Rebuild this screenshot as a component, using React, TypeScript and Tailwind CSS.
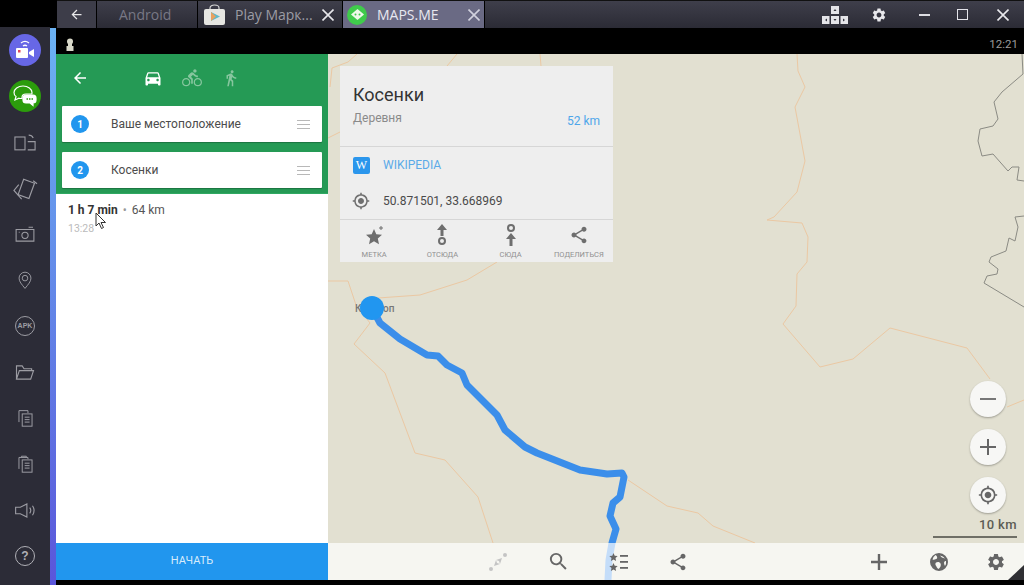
import { MdArrowBack, MdDirectionsBike, MdDirectionsCar, MdDirectionsWalk, MdMyLocation, MdSearch, MdSettings, MdShare } from 'react-icons/md'

const ROUTE = '372,308 380,323 400,339 427,355 438,356 447,365 462,373 467,385 497,415 505,430 525,447 537,453 580,470 607,474 622,473 624,477 620,497 613,503 610,516 616,529 612,543 609,560 608,580'

const ROADS = [
  '328,281 348,281 356,305 370,323 354,344 385,373 415,453 445,460 478,497 493,543',
  '378,298 420,295 467,280 497,262',
  '628,480 667,506 698,513 713,526 755,543',
  '797,54 798,71 805,87 795,107 805,161 797,192 774,217 767,220 802,223 808,237 807,262 797,274 796,306 783,324 820,367 853,359 890,328 967,348 990,379',
  '1007,407 1024,400',
  '357,54 348,62 332,68 330,87',
  '328,138 340,132',
  '447,66 457,54',
  '540,54 541,66',
]

const BORDERS = [
  '1022,54 1023,74 1002,92 994,102 998,119 993,126 980,129 978,141 982,156 993,154 1008,171 1012,167 1019,167 1017,180 1024,181',
  '1024,216 1015,217 1018,227 1015,241 1009,238 1006,251 991,257 989,262 998,269 997,274 987,276 984,283 1024,307',
]

function MapLines() {
  return (
    <svg className="absolute inset-0" width="696" height="526" viewBox="328 54 696 526" fill="none">
      {ROADS.map((p, i) => <polyline key={i} points={p} stroke="#ebc8a3" strokeWidth="1" />)}
      {BORDERS.map((p, i) => <polyline key={i} points={p} stroke="#8b8b84" strokeWidth="1" />)}
      <polyline points={ROUTE} stroke="#3b8eea" strokeWidth="7" strokeLinejoin="round" strokeLinecap="round" />
    </svg>
  )
}

function SideIcon({ children }: { children: React.ReactNode }) {
  return <div className="h-[46px] w-full flex items-center justify-center">{children}</div>
}

const stroke = { fill: 'none', stroke: '#9c9ca3', strokeWidth: 1.2 }

function CopyIcon({ tall }: { tall?: boolean }) {
  return (
    <svg width="17" height="18" viewBox="0 0 20 22" {...stroke}>
      <path d={tall ? 'M5 3V1.500h6V3M2 17V3h11v2' : 'M2 16V2h11v3'} />
      <rect x="6" y="6" width="12" height="15" />
      <path d="M9 10h6M9 13h6M9 16h6" />
    </svg>
  )
}

function Sidebar() {
  return (
    <div className="w-[50px] bg-[#2c2c37] flex flex-col items-center -mt-px">
      <SideIcon>
        <div className="w-8 h-8 rounded-full bg-[#6767e6] flex items-center justify-center">
          <svg width="20" height="22" viewBox="0 0 20 22" fill="none">
            <path d="M6 4c2.500-2 5.500-2 8 0M8 7c1.300-1 2.700-1 4 0" stroke="#fff" strokeWidth="1.300" />
            <rect x="1" y="9" width="12" height="10" rx="1" fill="#fff" />
            <path d="M14 13l5-3v8l-5-3z" fill="#fff" />
            <rect x="3" y="11" width="2.500" height="2.500" fill="#e0455a" />
          </svg>
        </div>
      </SideIcon>
      <SideIcon>
        <div className="w-8 h-8 rounded-full bg-[#2c9c0c] flex items-center justify-center">
          <svg width="26" height="24" viewBox="0 0 26 24" fill="none" stroke="#fff" strokeWidth="1.200">
            <path d="M11 2c5 0 9 3 9 6.500 0 .5 0 1-.2 1.500H14c-2.500 0-4 1.500-4 3.500v1c-1 0-2 0-3-.3L3 16l1-3.500C2.500 11.500 2 10 2 8.500 2 5 6 2 11 2z" />
            <path d="M14 11h7c2 0 3 1.300 3 3v2c0 1.700-1 3-3 3v2.500L18 19h-4c-2 0-3-1.300-3-3v-2c0-1.700 1-3 3-3z" fill="#fff" />
            <path d="M14.500 15h1.500M17 15h1.500M19.500 15H21" stroke="#2c9c0c" strokeWidth="1.400" />
          </svg>
        </div>
      </SideIcon>
      <SideIcon>
        <svg width="22" height="17" viewBox="0 0 24 18" {...stroke}>
          <rect x="1" y="3" width="11" height="14" />
          <path d="M15 8h8v9h-8M16 1c2 0 4 1 5 3" />
        </svg>
      </SideIcon>
      <SideIcon>
        <svg width="25" height="25" viewBox="0 0 26 26" {...stroke}>
          <rect x="8" y="5" width="12" height="17" transform="rotate(20 14 13)" />
          <path d="M6 9L1 15l8 9M21 5l4 3" />
        </svg>
      </SideIcon>
      <SideIcon>
        <svg width="20" height="16" viewBox="0 0 22 18" {...stroke}>
          <path d="M1 4h20v13H1z" />
          <circle cx="11" cy="10.500" r="3.500" />
          <path d="M15 1.500h5M4 7h1" />
        </svg>
      </SideIcon>
      <SideIcon>
        <svg width="16" height="19" viewBox="0 0 18 24" {...stroke}>
          <path d="M9 22C5 17 1.500 13.500 1.500 9a7.500 7.500 0 0 1 15 0C16.500 13.500 13 17 9 22z" />
          <circle cx="9" cy="9" r="3.500" />
        </svg>
      </SideIcon>
      <SideIcon>
        <div className="w-5 h-5 rounded-full border-[1.500px] border-[#9c9ca3] flex items-center justify-center font-['Liberation_Sans',sans-serif] font-bold text-[7px] text-[#9c9ca3]">
          APK
        </div>
      </SideIcon>
      <SideIcon>
        <svg width="20" height="17" viewBox="0 0 20 18" {...stroke}>
          <path d="M1 16V2h6l2 3h8v2M1 16h15l3-9H4z" />
        </svg>
      </SideIcon>
      <SideIcon><CopyIcon /></SideIcon>
      <SideIcon><CopyIcon tall /></SideIcon>
      <SideIcon>
        <svg width="22" height="15" viewBox="0 0 22 16" {...stroke}>
          <path d="M1 4.500h5L13 1v14L6 11.500H1z" />
          <path d="M16 5c1.300 1.700 1.300 4.300 0 6M19 3c2 3 2 7 0 10" />
        </svg>
      </SideIcon>
      <SideIcon>
        <div className="w-5 h-5 rounded-full border-[1.500px] border-[#b0b0b6] flex items-center justify-center font-['Liberation_Sans',sans-serif] font-bold text-[12px] text-[#b0b0b6]">
          ?
        </div>
      </SideIcon>
    </div>
  )
}

function CloseX({ color }: { color: string }) {
  return (
    <svg width="12" height="12" viewBox="0 0 12 12" fill="none" stroke={color} strokeWidth="1.600">
      <path d="M.5.5l11 11M11.500.5l-11 11" />
    </svg>
  )
}

function TitleBar() {
  return (
    <div className="h-[28px] flex bg-black font-['Open_Sans',sans-serif] text-[14px]">
      <div className="w-[57px]" />
      <div className="flex-1 flex bg-gradient-to-b from-[#3f3f4b] to-[#2b2b35] border-t border-[#111]">
        <div className="w-[40px] flex items-center justify-center bg-[#3d3d49] border-r border-black">
          <MdArrowBack className="text-[#e8e8ea]" size={15} />
        </div>
        <div className="w-[101px] flex items-center pl-[22px] pb-px text-[#787885] border-r border-black">Android</div>
        <div className="w-[145px] flex items-center pl-[6px] text-[#9c9ca4] border-r border-black">
          <svg width="21" height="21" viewBox="0 0 21 21" className="shrink-0 mr-[10px]">
            <path d="M6 6V4c0-4 9-4 9 0v2" fill="none" stroke="#d8d8d8" strokeWidth="1.200" />
            <rect x="0" y="5" width="21" height="16" rx="2" fill="#e6e6e2" />
            <path d="M7 8l9 4.500-9 4.500z" fill="#5fb8c9" />
            <path d="M7 8l5 4.500-5 4.500z" fill="#e9a15f" />
          </svg>
          <span className="whitespace-nowrap pb-px">Play Марк...</span>
          <span className="ml-[9px]"><CloseX color="#e6e6ea" /></span>
        </div>
        <div className="w-[141px] flex items-center pl-[4px] bg-[#6a6a84] text-[#e8e8f0]">
          <div className="w-5 h-5 rounded-full bg-[#3fcb4b] mr-[10px] flex items-center justify-center shrink-0">
            <svg width="13" height="11" viewBox="0 0 13 11" fill="#eef9ea">
              <path d="M6.500 0L13 5.500 6.500 11 0 5.500z" />
              <circle cx="4.500" cy="5.500" r="1" fill="#3fcb4b" />
              <circle cx="8.500" cy="5.500" r="1" fill="#3fcb4b" />
            </svg>
          </div>
          <span className="pb-px">MAPS.ME</span>
          <span className="ml-auto mr-[4px]"><CloseX color="#d2d2de" /></span>
        </div>
        <div className="flex-1 flex items-center justify-end pr-[15px] border-l border-black">
          <svg width="26" height="20" viewBox="0 0 26 20" fill="#e4e4e8" className="mr-[23px]">
            <rect x="9" y="1" width="8" height="8" />
            <rect x="0" y="11" width="7.500" height="8" />
            <rect x="9" y="11" width="8" height="8" />
            <rect x="18.500" y="11" width="7.500" height="8" />
            <path d="M11.500 6L13 4l1.500 2zM5 13.500v3L3 15zM21 13.500v3l2-1.500zM11.500 14L13 16l1.500-2z" fill="#33333d" />
          </svg>
          <MdSettings className="text-[#e8e8ec] mr-[32px]" size={16} />
          <div className="w-[11px] h-[2px] bg-[#dcdce2] mr-[27px]" />
          <div className="w-[11px] h-[11px] border-[1.500px] border-[#e4e4ea] mr-[29px]" />
          <CloseX color="#e8e8ec" />
        </div>
      </div>
    </div>
  )
}

function StopCard({ n, label }: { n: number; label: string }) {
  return (
    <div className="h-[36px] mx-[6px] bg-white rounded-[1px] shadow-[0_1px_1px_rgba(0,0,0,0.25)] flex items-center pl-[9px] pr-[12px]">
      <div className="w-[18px] h-[18px] rounded-full bg-[#2196ee] text-white text-[10px] font-bold flex items-center justify-center">{n}</div>
      <div className="ml-[22px] text-[12px] text-[#4c4c4c]">{label}</div>
      <div className="ml-auto w-[13px] flex flex-col gap-[3px]">
        <div className="h-px bg-[#b8b8b8]" />
        <div className="h-px bg-[#b8b8b8]" />
        <div className="h-px bg-[#b8b8b8]" />
      </div>
    </div>
  )
}

function RoutePanel() {
  return (
    <div className="w-[272px] bg-white flex flex-col relative">
      <div className="h-[140px] bg-[#259a55] border-b border-[#2fa862]">
        <div className="h-[52px] pb-[4px] flex items-center">
          <MdArrowBack className="text-white ml-[15px]" size={18} />
          <MdDirectionsCar className="text-white ml-[54px]" size={20} />
          <MdDirectionsBike className="text-[#86c69e] ml-[19px]" size={20} />
          <MdDirectionsWalk className="text-[#86c69e] ml-[20px]" size={18} />
        </div>
        <StopCard n={1} label="Ваше местоположение" />
        <div className="h-[10px]" />
        <StopCard n={2} label="Косенки" />
      </div>
      <div className="flex-1 pl-[12px] pt-[9px]">
        <div className="text-[12px] leading-[14px] text-[#555]">
          <span className="font-bold text-[#333]">1 h 7 min</span>
          <span className="text-[#999] mx-[5px]">•</span>64 km
        </div>
        <div className="text-[10.500px] leading-[12px] mt-[6px] text-[#bbb]">13:28</div>
      </div>
      <svg className="absolute left-[39px] top-[158px]" width="12" height="18" viewBox="0 0 12 18">
        <path d="M1 1v13l3-3 2.500 5.500 2-1L6 10.500h4.500z" fill="#fff" stroke="#333" strokeWidth="1" />
      </svg>
      <div className="h-[37px] bg-[#2196ee] flex items-center justify-center text-[11px] text-[#d8ecfb]">НАЧАТЬ</div>
    </div>
  )
}

function ActionItem({ icon, label }: { icon: React.ReactNode; label: string }) {
  return (
    <div className="flex flex-col items-center pt-[2px]">
      <div className="h-[26px] flex items-center justify-center">{icon}</div>
      <div className="text-[7.500px] leading-[10px] mt-[2px] text-[#909090] whitespace-nowrap">{label}</div>
    </div>
  )
}

function PlaceCard() {
  return (
    <div className="w-[273px] h-[196px] ml-[12px] mt-[12px] bg-[#eeeeee] flex flex-col shrink-0">
      <div className="h-[81px] border-b border-[#d6d6d6] px-[13px] pt-[16px]">
        <div className="text-[18px] leading-[26px] text-[#333]">Косенки</div>
        <div className="flex items-end justify-between mt-[2px]">
          <span className="text-[12px] leading-[16px] text-[#8a8a8a]">Деревня</span>
          <span className="text-[12px] leading-[16px] text-[#4ea6ea] -mb-[3px]">52 km</span>
        </div>
      </div>
      <div className="h-[73px] border-b border-[#d6d6d6] px-[13px] flex flex-col">
        <div className="h-[36px] flex items-center">
          <div className="w-[17px] h-[17px] rounded-[2px] bg-[#2b96ec] text-white text-[12px] font-['Liberation_Serif',serif] flex items-center justify-center">W</div>
          <span className="ml-[13px] text-[12px] text-[#5aaae8]">WIKIPEDIA</span>
        </div>
        <div className="h-[36px] flex items-center">
          <MdMyLocation className="text-[#6f6f6f] -ml-px" size={18} />
          <span className="ml-[13px] text-[12px] text-[#4a4a4a]">50.871501, 33.668969</span>
        </div>
      </div>
      <div className="flex-1 grid grid-cols-4">
        <ActionItem
          label="МЕТКА"
          icon={
            <svg width="20" height="20" viewBox="-2 0 20 20" fill="#6e6e6e">
              <path d="M8 4l2.300 5.200 5.700.6-4.200 3.800 1.200 5.600L8 16.300l-5 2.900 1.200-5.600L0 9.800l5.700-.6z" />
              <path d="M15 1v4M13 3h4" stroke="#6e6e6e" strokeWidth="1" />
            </svg>
          }
        />
        <ActionItem
          label="ОТСЮДА"
          icon={
            <svg width="12" height="22" viewBox="0 0 12 22" fill="none">
              <path d="M6 0l5 6H7.500v6h-3V6H1z" fill="#6e6e6e" />
              <circle cx="6" cy="17" r="3" stroke="#6e6e6e" strokeWidth="2" />
            </svg>
          }
        />
        <ActionItem
          label="СЮДА"
          icon={
            <svg width="12" height="22" viewBox="0 0 12 22" fill="none">
              <circle cx="6" cy="4" r="3" stroke="#6e6e6e" strokeWidth="2" />
              <path d="M6 9l5 6H7.500v7h-3v-7H1z" fill="#6e6e6e" />
            </svg>
          }
        />
        <ActionItem label="ПОДЕЛИТЬСЯ" icon={<MdShare className="text-[#6e6e6e]" size={20} />} />
      </div>
    </div>
  )
}

function RoundButton({ children }: { children: React.ReactNode }) {
  return (
    <div className="w-[36px] h-[36px] rounded-full bg-[#f7f7f5] shadow-[0_1px_2px_rgba(0,0,0,0.3)] flex items-center justify-center">
      {children}
    </div>
  )
}

function MapControls() {
  return (
    <div className="self-end flex flex-col items-end pr-[7px]">
      <div className="flex flex-col gap-[12px] pr-[11px]">
        <RoundButton><div className="w-[16px] h-[2px] bg-[#777]" /></RoundButton>
        <RoundButton>
          <svg width="18" height="18" viewBox="0 0 18 18" stroke="#666" strokeWidth="2"><path d="M9 1v16M1 9h16" /></svg>
        </RoundButton>
        <RoundButton><MdMyLocation className="text-[#666]" size={20} /></RoundButton>
      </div>
      <div className="text-[13px] leading-[14px] mt-[5px] font-medium tracking-[0.4px] text-[#5c5c54]">10 km</div>
      <div className="w-[84px] h-[2px] bg-[#6f6f66] mt-[4px] mb-[5px]" />
    </div>
  )
}

function BottomBar() {
  const gray = 'text-[#666]'
  return (
    <div className="relative h-[37px] bg-white/70 flex items-center">
      <svg width="20" height="20" viewBox="0 0 20 20" className="ml-[160px]" fill="#c4c4c4">
        <circle cx="3" cy="17" r="2" />
        <circle cx="17" cy="3" r="2" />
        <path d="M6 14l2-6 1 3 3 1zM14 6l-2 6-1-3-3-1z" />
      </svg>
      <MdSearch className={`${gray} ml-[39px]`} size={23} />
      <svg width="20" height="20" viewBox="0 0 20 20" className="ml-[39px]" fill="#666">
        <path d="M4.500 1l1.200 2.700 3 .3-2.200 2 .6 3-2.600-1.500L1.900 9l.6-3L.3 4l3-.3zM4.500 11l1.200 2.700 3 .3-2.200 2 .6 3-2.600-1.500-2.600 1.500.6-3-2.200-2 3-.3z" />
        <rect x="11" y="3" width="8" height="1.800" />
        <rect x="11" y="9" width="8" height="1.800" />
        <rect x="11" y="15" width="8" height="1.800" />
      </svg>
      <MdShare className={`${gray} ml-[39px]`} size={20} />
      <svg width="18" height="18" viewBox="0 0 18 18" stroke="#666" strokeWidth="2.400" className="ml-[182px]">
        <path d="M9 1v16M1 9h16" />
      </svg>
      <svg width="18" height="18" viewBox="0 0 18 18" className="ml-[42px]" fill="#666">
        <path fillRule="evenodd" d="M9 0a9 9 0 1 1 0 18A9 9 0 0 1 9 0zM2.500 6.500c2 .5 3 0 4.500-1 .5-1 0-2.500-1.500-3.500a7 7 0 0 0-3 4.500zM8 9c-2 0-3 1-2.500 3 1 1.500 1.500 3 3 4 1.500-1 3-3.500 2-5.500C10 9.500 9 9 8 9zM10 2.500c1 1.500 2.500 2.500 5 3A7 7 0 0 0 10 2.500zM16 8c-1 0-2 .5-2 2 0 1 .5 2 1 3a7 7 0 0 0 1-5z" />
      </svg>
      <MdSettings className={`${gray} ml-[38px]`} size={20} />
      {/* resize grip */}
      <svg className="absolute right-0 bottom-0" width="16" height="15" viewBox="0 0 16 15" fill="#2f2f33">
        <path d="M16 0v15H0z" />
      </svg>
    </div>
  )
}

function MapColumn() {
  return (
    <div className="relative flex-1 flex flex-col bg-[#e2e0d1]">
      <MapLines />
      <div className="relative flex-1 flex justify-between">
        <PlaceCard />
        <MapControls />
        <span className="absolute left-[27px] top-[249px] text-[10px] leading-[12px] font-medium text-[#777]">Конотоп</span>
        <div className="absolute left-[32px] top-[242px] w-[24px] h-[24px] rounded-full bg-[#2196f0]" />
      </div>
      <BottomBar />
    </div>
  )
}

export default function App() {
  return (
    <div className="w-[1024px] h-[585px] overflow-hidden bg-black flex flex-col font-['Roboto',sans-serif]">
      <TitleBar />
      <div className="flex-1 flex min-h-0">
        <Sidebar />
        <div className="w-[6px] bg-gradient-to-b from-[#6bb2f3] to-[#5a55da]" />
        <div className="flex-1 flex flex-col min-w-0">
          <div className="h-[26px] bg-black flex items-center justify-between pl-[10px] pr-[6px] pt-[7px]">
            <svg width="8" height="13" viewBox="0 0 8 13" fill="#d8d8c8">
              <circle cx="4" cy="3.500" r="3" />
              <path d="M2 5h4v3H7.500v5H.5V8H2z" />
            </svg>
            <span className="text-[11.500px] text-[#9b9b9b]">12:21</span>
          </div>
          <div className="flex-1 flex min-h-0">
            <RoutePanel />
            <MapColumn />
          </div>
          <div className="h-[5px] bg-black" />
        </div>
      </div>
    </div>
  )
}
